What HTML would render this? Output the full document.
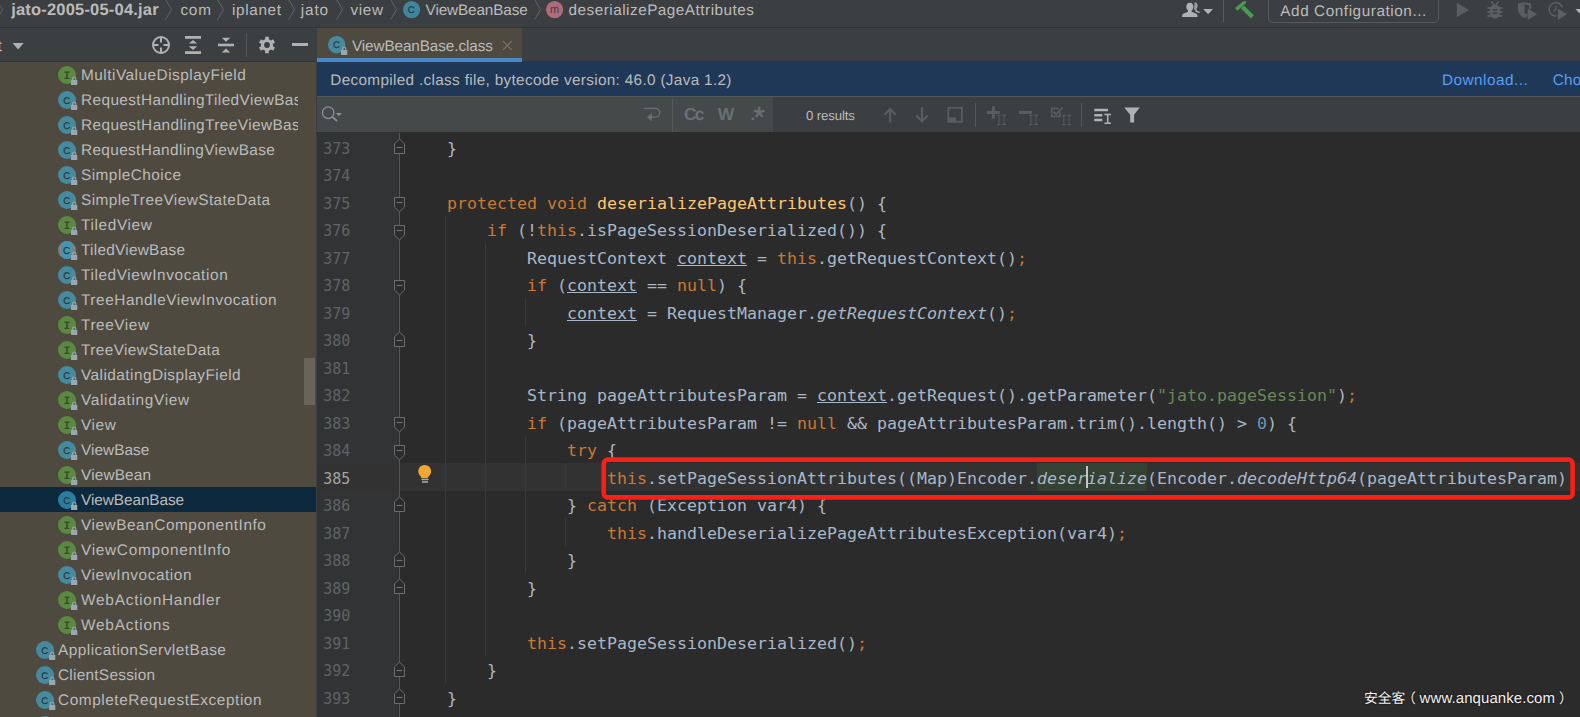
<!DOCTYPE html>
<html><head><meta charset="utf-8"><title>ViewBeanBase.class</title>
<style>
*{box-sizing:border-box;margin:0;padding:0}
html,body{width:1580px;height:717px;overflow:hidden;background:#3c3f41}
body{position:relative;text-rendering:geometricPrecision;font-family:"Liberation Sans","Noto Sans CJK SC",sans-serif;color:#bbbbbb;font-size:16px}
.abs{position:absolute}
svg{position:absolute;overflow:visible}
#nav{left:0;top:0;width:1580px;height:28px;background:#3c3f41;border-bottom:1px solid #313335;overflow:hidden}
#ltool{left:0;top:28px;width:316px;height:34px;background:#3c3f41;border-bottom:1px solid #323537;overflow:hidden}
#tree{left:0;top:62px;width:316px;height:655px;background:#4e4a40;overflow:hidden}
.sel{left:0;width:316px;height:25px;background:#0d293e}
#tabs{left:317px;top:28px;width:1263px;height:34px;background:#3c3f41;overflow:hidden}
#tab{left:0;top:0;width:205px;height:34px;background:#4e4a40;border-bottom:4px solid #4a88c7}
#banner{left:317px;top:62px;width:1263px;height:34px;background:#1f3857;overflow:hidden}
#tline{left:522px;top:61px;width:1058px;height:1px;background:#323537}
#bline{left:317px;top:96px;width:1263px;height:1px;background:#515658}
#search{left:317px;top:97px;width:1263px;height:35px;background:#3c3f41;overflow:hidden}
#sfield{left:0;top:0;width:456px;height:35px;background:#45494a}
#editor{left:317px;top:132px;width:1263px;height:585px;background:#2b2b2b;overflow:hidden}
#gutter{left:0;top:0;width:82px;height:585px;background:#313335}
#gline{left:82px;top:1px;width:1px;height:584px;background:#555555}
#caret-row{left:0;top:331px;width:1263px;height:27.5px;background:#323232}
.k{color:#cc7832}.m{color:#ffc66d}.s{color:#6a8759}.n{color:#6897bb}.i{font-style:italic}
.u{text-decoration:underline;text-decoration-thickness:1px;text-underline-offset:1px}
.g{position:absolute;width:1px;background:#383838}
</style></head><body>
<div id="nav" class="abs"></div><div id="ltool" class="abs"></div><div id="tree" class="abs"></div><div id="tabs" class="abs"><div id="tab" class="abs"></div></div><div id="tline" class="abs"></div><div id="banner" class="abs"></div><div id="bline" class="abs"></div><div id="search" class="abs"><div id="sfield" class="abs"></div></div><div id="editor" class="abs"><div id="gutter" class="abs"></div><div id="caret-row" class="abs"></div><div id="gline" class="abs"></div></div>
<svg style="left:-4px;top:-1px" width="8" height="22" viewBox="0 0 8 22"><path d="M0.5 0.5L6.5 10.6L0.5 20.7" fill="none" stroke="#626466" stroke-width="1"/></svg>
<div class="abs" style="left:11.20px;top:2.00px;font-size:16.5px;line-height:1;color:#bbbbbb;white-space:pre;font-weight:700;letter-spacing:0.189px;">jato-2005-05-04.jar</div>
<svg style="left:165px;top:-1px" width="8" height="22" viewBox="0 0 8 22"><path d="M0.5 0.5L6.5 10.6L0.5 20.7" fill="none" stroke="#626466" stroke-width="1"/></svg>
<svg style="left:217px;top:-1px" width="8" height="22" viewBox="0 0 8 22"><path d="M0.5 0.5L6.5 10.6L0.5 20.7" fill="none" stroke="#626466" stroke-width="1"/></svg>
<svg style="left:288px;top:-1px" width="8" height="22" viewBox="0 0 8 22"><path d="M0.5 0.5L6.5 10.6L0.5 20.7" fill="none" stroke="#626466" stroke-width="1"/></svg>
<svg style="left:336px;top:-1px" width="8" height="22" viewBox="0 0 8 22"><path d="M0.5 0.5L6.5 10.6L0.5 20.7" fill="none" stroke="#626466" stroke-width="1"/></svg>
<svg style="left:390px;top:-1px" width="8" height="22" viewBox="0 0 8 22"><path d="M0.5 0.5L6.5 10.6L0.5 20.7" fill="none" stroke="#626466" stroke-width="1"/></svg>
<svg style="left:534px;top:-1px" width="8" height="22" viewBox="0 0 8 22"><path d="M0.5 0.5L6.5 10.6L0.5 20.7" fill="none" stroke="#626466" stroke-width="1"/></svg>
<div class="abs" style="left:180.40px;top:3.00px;font-size:15.3px;line-height:1;color:#bbbbbb;white-space:pre;letter-spacing:0.798px;">com</div>
<div class="abs" style="left:232.00px;top:3.00px;font-size:15.3px;line-height:1;color:#bbbbbb;white-space:pre;letter-spacing:0.646px;">iplanet</div>
<div class="abs" style="left:300.80px;top:3.00px;font-size:15.3px;line-height:1;color:#bbbbbb;white-space:pre;letter-spacing:0.882px;">jato</div>
<div class="abs" style="left:350.40px;top:3.00px;font-size:15.3px;line-height:1;color:#bbbbbb;white-space:pre;letter-spacing:0.698px;">view</div>
<svg style="left:402.6px;top:1.0px" width="17.2" height="17.2" viewBox="0 0 17.2 17.2"><circle cx="8.6" cy="8.6" r="8.6" fill="rgba(64,182,224,.6)"/><text x="8.299999999999999" y="12.2" text-anchor="middle" font-family="Liberation Sans" font-weight="normal" font-size="9.6" fill="rgba(35,31,32,.7)" stroke="rgba(35,31,32,.7)" stroke-width="0.35">C</text></svg>
<div class="abs" style="left:425.60px;top:3.00px;font-size:15.3px;line-height:1;color:#bbbbbb;white-space:pre;letter-spacing:-0.124px;">ViewBeanBase</div>
<svg style="left:546.4px;top:1.0px" width="17.2" height="17.2" viewBox="0 0 17.2 17.2"><circle cx="8.6" cy="8.6" r="8.6" fill="rgba(249,139,158,.6)"/><text x="8.6" y="11.8" text-anchor="middle" font-family="Liberation Sans" font-weight="normal" font-size="11" fill="rgba(35,31,32,.72)">m</text></svg>
<div class="abs" style="left:568.50px;top:3.00px;font-size:15.3px;line-height:1;color:#bbbbbb;white-space:pre;letter-spacing:0.501px;">deserializePageAttributes</div>
<svg style="left:1181px;top:1px" width="34" height="18" viewBox="0 0 34 18"><path d="M13.6 1.2c2 0 3 1.6 3 3.6 0 1.3-.5 2.5-1.2 3.2l.3 1.2 3.3 1.7-.6 1.3-3.6-1.2-1.6-3z" fill="#afb1b3" opacity=".85"/><path d="M8.9 1.8c2.1 0 3.5 1.6 3.5 3.9 0 1.6-.7 3-1.7 3.8v1.2l4.2 1.9c1 .5 1.6 1.4 1.6 2.4v1H1.2v-1c0-1 .6-1.9 1.6-2.4L7 10.700V9.500C6 8.700 5.300 7.300 5.300 5.700c0-2.300 1.500-3.900 3.600-3.900z" fill="#afb1b3"/><path d="M22.200 8h9.800l-4.900 5.200z" fill="#afb1b3"/></svg>
<div class="abs" style="left:1223px;top:0;width:1px;height:22px;background:#585b5d"></div>
<svg style="left:1234px;top:0" width="21" height="20" viewBox="0 0 21 20"><path d="M1.100 8L9 1.400 12.300 1.100 11.600 3.400 3.400 10.800z" fill="#499c54"/><path d="M10 5.400L19.800 15.200 17 18.400 6.800 8.200z" fill="#499c54"/></svg>
<div class="abs" style="left:1268.200px;top:-6px;width:171.200px;height:28.900px;border:1.800px solid #56595b;border-radius:5px"></div>
<div class="abs" style="left:1280.30px;top:4.00px;font-size:15.3px;line-height:1;color:#bbbbbb;white-space:pre;letter-spacing:0.569px;">Add Configuration...</div>
<svg style="left:1456px;top:2px" width="14" height="17" viewBox="0 0 14 17"><path d="M0.800 0.700l12.200 7.300L0.800 15.300z" fill="#5c5e5f"/></svg>
<svg style="left:1486px;top:0" width="18" height="20" viewBox="0 0 18 20"><ellipse cx="9" cy="11.500" rx="5.200" ry="7.300" fill="#5c5e5f"/><path d="M1.500 8h15M1.500 12h15M1.500 16h15" stroke="#5c5e5f" stroke-width="2" fill="none"/><path d="M5.300 1.300L8 4.800M12.700 1.300L10 4.800" stroke="#5c5e5f" stroke-width="1.700" fill="none"/><path d="M6.800 9.700h4.400M6.800 13.300h4.400" stroke="#3c3f41" stroke-width="1.400"/></svg>
<svg style="left:1517px;top:1px" width="21" height="20" viewBox="0 0 21 20"><path d="M1 2.600L7.600 1.200V17.200C3.500 15.200 1 11.600 1 7.500z" fill="#5c5e5f"/><path d="M7.600 1.200L14.200 2.600V8h-2.100V4.300L7.600 3.300z" fill="#5c5e5f"/><path d="M7.600 17.200c1-.5 2-1.200 2.700-2v-2.500h-2.700z" fill="#5c5e5f"/><path d="M10.700 7.400L20 13.200 10.700 19z" fill="#5c5e5f"/></svg>
<svg style="left:1547px;top:1px" width="33" height="20" viewBox="0 0 33 20"><path d="M15.200 6.300A6.700 6.700 0 1 0 9.400 15" fill="none" stroke="#5c5e5f" stroke-width="1.600"/><path d="M9.400 4.800L8.700 8.300 6.800 10.600" fill="none" stroke="#5c5e5f" stroke-width="1.400"/><path d="M10.800 7.400l9.200 5.800-9.200 5.800z" fill="#5c5e5f"/><path d="M28.500 7.900h8l-4 4.500z" fill="#afb1b3"/></svg>
<div class="abs" style="left:-2.60px;top:39.00px;font-size:15.6px;line-height:1;color:#bbbbbb;white-space:pre;">t</div>
<svg style="left:12px;top:42px" width="12" height="8" viewBox="0 0 12 8"><path d="M0.500 1h11.200L6.100 7.600z" fill="#afb1b3"/></svg>
<svg style="left:151px;top:35px" width="20" height="20" viewBox="0 0 20 20"><circle cx="10" cy="10" r="8" fill="none" stroke="#afb1b3" stroke-width="2"/><path d="M10 2v5.500M10 12.500v5.500M2 10h5.500M12.500 10h5.500" stroke="#afb1b3" stroke-width="2" fill="none"/></svg>
<svg style="left:185px;top:36px" width="16" height="18" viewBox="0 0 16 18"><rect x="0" y="0" width="16" height="2.800" fill="#afb1b3"/><rect x="0" y="15.200" width="16" height="2.800" fill="#afb1b3"/><path d="M8 3.900l4.200 3.600H3.800z" fill="#afb1b3"/><path d="M8 14.100l4.200-3.800H3.800z" fill="#afb1b3"/></svg>
<svg style="left:218px;top:36px" width="16" height="18" viewBox="0 0 16 18"><rect x="0" y="7.700" width="16" height="2.600" fill="#afb1b3"/><path d="M8 5.800l4.200-4.100H3.800z" fill="#afb1b3"/><path d="M8 12.400l4.200 4.100H3.800z" fill="#afb1b3"/></svg>
<div class="abs" style="left:246px;top:33px;width:1px;height:24px;background:#555759"></div>
<svg style="left:257px;top:35px" width="20" height="20" viewBox="0 0 20 20"><path d="M8.18 1.85L11.82 1.85L11.82 4.18L14.13 5.51L16.15 4.35L17.97 7.50L15.95 8.67L15.95 11.33L17.97 12.50L16.15 15.65L14.13 14.49L11.82 15.82L11.82 18.15L8.18 18.15L8.18 15.82L5.87 14.49L3.85 15.65L2.03 12.50L4.05 11.33L4.05 8.67L2.03 7.50L3.85 4.35L5.87 5.51L8.18 4.18zM12.90 10.00A2.9 2.9 0 1 0 7.10 10.00A2.9 2.9 0 1 0 12.90 10.00z" fill="#afb1b3" fill-rule="evenodd"/></svg>
<div class="abs" style="left:292px;top:43.200px;width:16px;height:3px;background:#afb1b3"></div>
<div class="abs sel" style="top:487px"></div>
<div class="abs" style="left:0;top:62px;width:298.200px;height:655px;overflow:hidden">
<div class="abs" style="left:81.00px;top:6.00px;font-size:15.4px;line-height:1;color:#bbbbbb;white-space:pre;letter-spacing:0.489px;">MultiValueDisplayField</div>
<div class="abs" style="left:81.00px;top:31.00px;font-size:15.4px;line-height:1;color:#bbbbbb;white-space:pre;letter-spacing:0.385px;">RequestHandlingTiledViewBase</div>
<div class="abs" style="left:81.00px;top:56.00px;font-size:15.4px;line-height:1;color:#bbbbbb;white-space:pre;letter-spacing:0.400px;">RequestHandlingTreeViewBase</div>
<div class="abs" style="left:81.00px;top:81.00px;font-size:15.4px;line-height:1;color:#bbbbbb;white-space:pre;letter-spacing:0.346px;">RequestHandlingViewBase</div>
<div class="abs" style="left:81.00px;top:106.00px;font-size:15.4px;line-height:1;color:#bbbbbb;white-space:pre;letter-spacing:0.454px;">SimpleChoice</div>
<div class="abs" style="left:81.00px;top:131.00px;font-size:15.4px;line-height:1;color:#bbbbbb;white-space:pre;letter-spacing:0.428px;">SimpleTreeViewStateData</div>
<div class="abs" style="left:81.00px;top:156.00px;font-size:15.4px;line-height:1;color:#bbbbbb;white-space:pre;letter-spacing:0.625px;">TiledView</div>
<div class="abs" style="left:81.00px;top:181.00px;font-size:15.4px;line-height:1;color:#bbbbbb;white-space:pre;letter-spacing:0.250px;">TiledViewBase</div>
<div class="abs" style="left:81.00px;top:206.00px;font-size:15.4px;line-height:1;color:#bbbbbb;white-space:pre;letter-spacing:0.593px;">TiledViewInvocation</div>
<div class="abs" style="left:81.00px;top:231.00px;font-size:15.4px;line-height:1;color:#bbbbbb;white-space:pre;letter-spacing:0.542px;">TreeHandleViewInvocation</div>
<div class="abs" style="left:81.00px;top:256.00px;font-size:15.4px;line-height:1;color:#bbbbbb;white-space:pre;letter-spacing:0.555px;">TreeView</div>
<div class="abs" style="left:81.00px;top:281.00px;font-size:15.4px;line-height:1;color:#bbbbbb;white-space:pre;letter-spacing:0.388px;">TreeViewStateData</div>
<div class="abs" style="left:81.00px;top:306.00px;font-size:15.4px;line-height:1;color:#bbbbbb;white-space:pre;letter-spacing:0.446px;">ValidatingDisplayField</div>
<div class="abs" style="left:81.00px;top:331.00px;font-size:15.4px;line-height:1;color:#bbbbbb;white-space:pre;letter-spacing:0.654px;">ValidatingView</div>
<div class="abs" style="left:81.00px;top:356.00px;font-size:15.4px;line-height:1;color:#bbbbbb;white-space:pre;letter-spacing:0.577px;">View</div>
<div class="abs" style="left:81.00px;top:381.00px;font-size:15.4px;line-height:1;color:#bbbbbb;white-space:pre;letter-spacing:0.016px;">ViewBase</div>
<div class="abs" style="left:81.00px;top:406.00px;font-size:15.4px;line-height:1;color:#bbbbbb;white-space:pre;letter-spacing:0.146px;">ViewBean</div>
<div class="abs" style="left:81.00px;top:431.00px;font-size:15.4px;line-height:1;color:#bbbbbb;white-space:pre;letter-spacing:-0.084px;">ViewBeanBase</div>
<div class="abs" style="left:81.00px;top:456.00px;font-size:15.4px;line-height:1;color:#bbbbbb;white-space:pre;letter-spacing:0.530px;">ViewBeanComponentInfo</div>
<div class="abs" style="left:81.00px;top:481.00px;font-size:15.4px;line-height:1;color:#bbbbbb;white-space:pre;letter-spacing:0.692px;">ViewComponentInfo</div>
<div class="abs" style="left:81.00px;top:506.00px;font-size:15.4px;line-height:1;color:#bbbbbb;white-space:pre;letter-spacing:0.561px;">ViewInvocation</div>
<div class="abs" style="left:81.00px;top:531.00px;font-size:15.4px;line-height:1;color:#bbbbbb;white-space:pre;letter-spacing:0.760px;">WebActionHandler</div>
<div class="abs" style="left:81.00px;top:556.00px;font-size:15.4px;line-height:1;color:#bbbbbb;white-space:pre;letter-spacing:0.766px;">WebActions</div>
<div class="abs" style="left:58.00px;top:581.00px;font-size:15.4px;line-height:1;color:#bbbbbb;white-space:pre;letter-spacing:0.460px;">ApplicationServletBase</div>
<div class="abs" style="left:58.00px;top:606.00px;font-size:15.4px;line-height:1;color:#bbbbbb;white-space:pre;letter-spacing:0.253px;">ClientSession</div>
<div class="abs" style="left:58.00px;top:631.00px;font-size:15.4px;line-height:1;color:#bbbbbb;white-space:pre;letter-spacing:0.554px;">CompleteRequestException</div>
<div class="abs" style="left:58.00px;top:656.00px;font-size:15.4px;line-height:1;color:#bbbbbb;white-space:pre;letter-spacing:0.18px;">CompleteRequestInfo</div>
</div>
<svg style="left:58.0px;top:66.0px" width="18" height="18" viewBox="0 0 18 18"><circle cx="9" cy="9" r="9" fill="rgba(98,181,67,.6)"/><text x="8.8" y="12.8" text-anchor="middle" font-family="Liberation Mono" font-weight="bold" font-size="11.4" fill="rgba(35,31,32,.62)">I</text></svg><svg style="left:70.6px;top:76.0px" width="7" height="9" viewBox="0 0 7 9"><rect x="0" y="4" width="6.300" height="5" fill="#9aa7b0"/><path d="M1.6 4.2V2.6a1.6 1.6 0 0 1 3.2 0V4.2" fill="none" stroke="#9aa7b0" stroke-width="1.1"/></svg>
<svg style="left:58.0px;top:91.0px" width="18" height="18" viewBox="0 0 18 18"><circle cx="9" cy="9" r="9" fill="rgba(64,182,224,.6)"/><text x="8.7" y="12.6" text-anchor="middle" font-family="Liberation Sans" font-weight="normal" font-size="9.6" fill="rgba(35,31,32,.7)" stroke="rgba(35,31,32,.7)" stroke-width="0.35">C</text></svg><svg style="left:70.6px;top:101.0px" width="7" height="9" viewBox="0 0 7 9"><rect x="0" y="4" width="6.300" height="5" fill="#9aa7b0"/><path d="M1.6 4.2V2.6a1.6 1.6 0 0 1 3.2 0V4.2" fill="none" stroke="#9aa7b0" stroke-width="1.1"/></svg>
<svg style="left:58.0px;top:116.0px" width="18" height="18" viewBox="0 0 18 18"><circle cx="9" cy="9" r="9" fill="rgba(64,182,224,.6)"/><text x="8.7" y="12.6" text-anchor="middle" font-family="Liberation Sans" font-weight="normal" font-size="9.6" fill="rgba(35,31,32,.7)" stroke="rgba(35,31,32,.7)" stroke-width="0.35">C</text></svg><svg style="left:70.6px;top:126.0px" width="7" height="9" viewBox="0 0 7 9"><rect x="0" y="4" width="6.300" height="5" fill="#9aa7b0"/><path d="M1.6 4.2V2.6a1.6 1.6 0 0 1 3.2 0V4.2" fill="none" stroke="#9aa7b0" stroke-width="1.1"/></svg>
<svg style="left:58.0px;top:141.0px" width="18" height="18" viewBox="0 0 18 18"><circle cx="9" cy="9" r="9" fill="rgba(64,182,224,.6)"/><text x="8.7" y="12.6" text-anchor="middle" font-family="Liberation Sans" font-weight="normal" font-size="9.6" fill="rgba(35,31,32,.7)" stroke="rgba(35,31,32,.7)" stroke-width="0.35">C</text></svg><svg style="left:70.6px;top:151.0px" width="7" height="9" viewBox="0 0 7 9"><rect x="0" y="4" width="6.300" height="5" fill="#9aa7b0"/><path d="M1.6 4.2V2.6a1.6 1.6 0 0 1 3.2 0V4.2" fill="none" stroke="#9aa7b0" stroke-width="1.1"/></svg>
<svg style="left:58.0px;top:166.0px" width="18" height="18" viewBox="0 0 18 18"><circle cx="9" cy="9" r="9" fill="rgba(64,182,224,.6)"/><text x="8.7" y="12.6" text-anchor="middle" font-family="Liberation Sans" font-weight="normal" font-size="9.6" fill="rgba(35,31,32,.7)" stroke="rgba(35,31,32,.7)" stroke-width="0.35">C</text></svg><svg style="left:70.6px;top:176.0px" width="7" height="9" viewBox="0 0 7 9"><rect x="0" y="4" width="6.300" height="5" fill="#9aa7b0"/><path d="M1.6 4.2V2.6a1.6 1.6 0 0 1 3.2 0V4.2" fill="none" stroke="#9aa7b0" stroke-width="1.1"/></svg>
<svg style="left:58.0px;top:191.0px" width="18" height="18" viewBox="0 0 18 18"><circle cx="9" cy="9" r="9" fill="rgba(64,182,224,.6)"/><text x="8.7" y="12.6" text-anchor="middle" font-family="Liberation Sans" font-weight="normal" font-size="9.6" fill="rgba(35,31,32,.7)" stroke="rgba(35,31,32,.7)" stroke-width="0.35">C</text></svg><svg style="left:70.6px;top:201.0px" width="7" height="9" viewBox="0 0 7 9"><rect x="0" y="4" width="6.300" height="5" fill="#9aa7b0"/><path d="M1.6 4.2V2.6a1.6 1.6 0 0 1 3.2 0V4.2" fill="none" stroke="#9aa7b0" stroke-width="1.1"/></svg>
<svg style="left:58.0px;top:216.0px" width="18" height="18" viewBox="0 0 18 18"><circle cx="9" cy="9" r="9" fill="rgba(98,181,67,.6)"/><text x="8.8" y="12.8" text-anchor="middle" font-family="Liberation Mono" font-weight="bold" font-size="11.4" fill="rgba(35,31,32,.62)">I</text></svg><svg style="left:70.6px;top:226.0px" width="7" height="9" viewBox="0 0 7 9"><rect x="0" y="4" width="6.300" height="5" fill="#9aa7b0"/><path d="M1.6 4.2V2.6a1.6 1.6 0 0 1 3.2 0V4.2" fill="none" stroke="#9aa7b0" stroke-width="1.1"/></svg>
<svg style="left:58.0px;top:241.0px" width="18" height="18" viewBox="0 0 18 18"><defs><clipPath id="ac"><circle cx="9" cy="9" r="9"/></clipPath></defs><circle cx="9" cy="9" r="9" fill="rgba(154,167,176,.62)"/><rect x="4" y="0" width="10.3" height="18" fill="#4496b0" clip-path="url(#ac)"/><text x="8.7" y="12.7" text-anchor="middle" font-family="Liberation Sans" font-size="10" fill="rgba(35,31,32,.7)" stroke="rgba(35,31,32,.7)" stroke-width="0.35">C</text></svg><svg style="left:70.6px;top:251.0px" width="7" height="9" viewBox="0 0 7 9"><rect x="0" y="4" width="6.300" height="5" fill="#9aa7b0"/><path d="M1.6 4.2V2.6a1.6 1.6 0 0 1 3.2 0V4.2" fill="none" stroke="#9aa7b0" stroke-width="1.1"/></svg>
<svg style="left:58.0px;top:266.0px" width="18" height="18" viewBox="0 0 18 18"><circle cx="9" cy="9" r="9" fill="rgba(64,182,224,.6)"/><text x="8.7" y="12.6" text-anchor="middle" font-family="Liberation Sans" font-weight="normal" font-size="9.6" fill="rgba(35,31,32,.7)" stroke="rgba(35,31,32,.7)" stroke-width="0.35">C</text></svg><svg style="left:70.6px;top:276.0px" width="7" height="9" viewBox="0 0 7 9"><rect x="0" y="4" width="6.300" height="5" fill="#9aa7b0"/><path d="M1.6 4.2V2.6a1.6 1.6 0 0 1 3.2 0V4.2" fill="none" stroke="#9aa7b0" stroke-width="1.1"/></svg>
<svg style="left:58.0px;top:291.0px" width="18" height="18" viewBox="0 0 18 18"><circle cx="9" cy="9" r="9" fill="rgba(64,182,224,.6)"/><text x="8.7" y="12.6" text-anchor="middle" font-family="Liberation Sans" font-weight="normal" font-size="9.6" fill="rgba(35,31,32,.7)" stroke="rgba(35,31,32,.7)" stroke-width="0.35">C</text></svg><svg style="left:70.6px;top:301.0px" width="7" height="9" viewBox="0 0 7 9"><rect x="0" y="4" width="6.300" height="5" fill="#9aa7b0"/><path d="M1.6 4.2V2.6a1.6 1.6 0 0 1 3.2 0V4.2" fill="none" stroke="#9aa7b0" stroke-width="1.1"/></svg>
<svg style="left:58.0px;top:316.0px" width="18" height="18" viewBox="0 0 18 18"><circle cx="9" cy="9" r="9" fill="rgba(98,181,67,.6)"/><text x="8.8" y="12.8" text-anchor="middle" font-family="Liberation Mono" font-weight="bold" font-size="11.4" fill="rgba(35,31,32,.62)">I</text></svg><svg style="left:70.6px;top:326.0px" width="7" height="9" viewBox="0 0 7 9"><rect x="0" y="4" width="6.300" height="5" fill="#9aa7b0"/><path d="M1.6 4.2V2.6a1.6 1.6 0 0 1 3.2 0V4.2" fill="none" stroke="#9aa7b0" stroke-width="1.1"/></svg>
<svg style="left:58.0px;top:341.0px" width="18" height="18" viewBox="0 0 18 18"><circle cx="9" cy="9" r="9" fill="rgba(98,181,67,.6)"/><text x="8.8" y="12.8" text-anchor="middle" font-family="Liberation Mono" font-weight="bold" font-size="11.4" fill="rgba(35,31,32,.62)">I</text></svg><svg style="left:70.6px;top:351.0px" width="7" height="9" viewBox="0 0 7 9"><rect x="0" y="4" width="6.300" height="5" fill="#9aa7b0"/><path d="M1.6 4.2V2.6a1.6 1.6 0 0 1 3.2 0V4.2" fill="none" stroke="#9aa7b0" stroke-width="1.1"/></svg>
<svg style="left:58.0px;top:366.0px" width="18" height="18" viewBox="0 0 18 18"><circle cx="9" cy="9" r="9" fill="rgba(64,182,224,.6)"/><text x="8.7" y="12.6" text-anchor="middle" font-family="Liberation Sans" font-weight="normal" font-size="9.6" fill="rgba(35,31,32,.7)" stroke="rgba(35,31,32,.7)" stroke-width="0.35">C</text></svg><svg style="left:70.6px;top:376.0px" width="7" height="9" viewBox="0 0 7 9"><rect x="0" y="4" width="6.300" height="5" fill="#9aa7b0"/><path d="M1.6 4.2V2.6a1.6 1.6 0 0 1 3.2 0V4.2" fill="none" stroke="#9aa7b0" stroke-width="1.1"/></svg>
<svg style="left:58.0px;top:391.0px" width="18" height="18" viewBox="0 0 18 18"><circle cx="9" cy="9" r="9" fill="rgba(98,181,67,.6)"/><text x="8.8" y="12.8" text-anchor="middle" font-family="Liberation Mono" font-weight="bold" font-size="11.4" fill="rgba(35,31,32,.62)">I</text></svg><svg style="left:70.6px;top:401.0px" width="7" height="9" viewBox="0 0 7 9"><rect x="0" y="4" width="6.300" height="5" fill="#9aa7b0"/><path d="M1.6 4.2V2.6a1.6 1.6 0 0 1 3.2 0V4.2" fill="none" stroke="#9aa7b0" stroke-width="1.1"/></svg>
<svg style="left:58.0px;top:416.0px" width="18" height="18" viewBox="0 0 18 18"><circle cx="9" cy="9" r="9" fill="rgba(98,181,67,.6)"/><text x="8.8" y="12.8" text-anchor="middle" font-family="Liberation Mono" font-weight="bold" font-size="11.4" fill="rgba(35,31,32,.62)">I</text></svg><svg style="left:70.6px;top:426.0px" width="7" height="9" viewBox="0 0 7 9"><rect x="0" y="4" width="6.300" height="5" fill="#9aa7b0"/><path d="M1.6 4.2V2.6a1.6 1.6 0 0 1 3.2 0V4.2" fill="none" stroke="#9aa7b0" stroke-width="1.1"/></svg>
<svg style="left:58.0px;top:441.0px" width="18" height="18" viewBox="0 0 18 18"><circle cx="9" cy="9" r="9" fill="rgba(64,182,224,.6)"/><text x="8.7" y="12.6" text-anchor="middle" font-family="Liberation Sans" font-weight="normal" font-size="9.6" fill="rgba(35,31,32,.7)" stroke="rgba(35,31,32,.7)" stroke-width="0.35">C</text></svg><svg style="left:70.6px;top:451.0px" width="7" height="9" viewBox="0 0 7 9"><rect x="0" y="4" width="6.300" height="5" fill="#9aa7b0"/><path d="M1.6 4.2V2.6a1.6 1.6 0 0 1 3.2 0V4.2" fill="none" stroke="#9aa7b0" stroke-width="1.1"/></svg>
<svg style="left:58.0px;top:466.0px" width="18" height="18" viewBox="0 0 18 18"><circle cx="9" cy="9" r="9" fill="rgba(98,181,67,.6)"/><text x="8.8" y="12.8" text-anchor="middle" font-family="Liberation Mono" font-weight="bold" font-size="11.4" fill="rgba(35,31,32,.62)">I</text></svg><svg style="left:70.6px;top:476.0px" width="7" height="9" viewBox="0 0 7 9"><rect x="0" y="4" width="6.300" height="5" fill="#9aa7b0"/><path d="M1.6 4.2V2.6a1.6 1.6 0 0 1 3.2 0V4.2" fill="none" stroke="#9aa7b0" stroke-width="1.1"/></svg>
<svg style="left:58.0px;top:491.0px" width="18" height="18" viewBox="0 0 18 18"><circle cx="9" cy="9" r="9" fill="rgba(64,182,224,.6)"/><text x="8.7" y="12.6" text-anchor="middle" font-family="Liberation Sans" font-weight="normal" font-size="9.6" fill="rgba(35,31,32,.7)" stroke="rgba(35,31,32,.7)" stroke-width="0.35">C</text></svg><svg style="left:70.6px;top:501.0px" width="7" height="9" viewBox="0 0 7 9"><rect x="0" y="4" width="6.300" height="5" fill="#9aa7b0"/><path d="M1.6 4.2V2.6a1.6 1.6 0 0 1 3.2 0V4.2" fill="none" stroke="#9aa7b0" stroke-width="1.1"/></svg>
<svg style="left:58.0px;top:516.0px" width="18" height="18" viewBox="0 0 18 18"><circle cx="9" cy="9" r="9" fill="rgba(98,181,67,.6)"/><text x="8.8" y="12.8" text-anchor="middle" font-family="Liberation Mono" font-weight="bold" font-size="11.4" fill="rgba(35,31,32,.62)">I</text></svg><svg style="left:70.6px;top:526.0px" width="7" height="9" viewBox="0 0 7 9"><rect x="0" y="4" width="6.300" height="5" fill="#9aa7b0"/><path d="M1.6 4.2V2.6a1.6 1.6 0 0 1 3.2 0V4.2" fill="none" stroke="#9aa7b0" stroke-width="1.1"/></svg>
<svg style="left:58.0px;top:541.0px" width="18" height="18" viewBox="0 0 18 18"><circle cx="9" cy="9" r="9" fill="rgba(98,181,67,.6)"/><text x="8.8" y="12.8" text-anchor="middle" font-family="Liberation Mono" font-weight="bold" font-size="11.4" fill="rgba(35,31,32,.62)">I</text></svg><svg style="left:70.6px;top:551.0px" width="7" height="9" viewBox="0 0 7 9"><rect x="0" y="4" width="6.300" height="5" fill="#9aa7b0"/><path d="M1.6 4.2V2.6a1.6 1.6 0 0 1 3.2 0V4.2" fill="none" stroke="#9aa7b0" stroke-width="1.1"/></svg>
<svg style="left:58.0px;top:566.0px" width="18" height="18" viewBox="0 0 18 18"><circle cx="9" cy="9" r="9" fill="rgba(64,182,224,.6)"/><text x="8.7" y="12.6" text-anchor="middle" font-family="Liberation Sans" font-weight="normal" font-size="9.6" fill="rgba(35,31,32,.7)" stroke="rgba(35,31,32,.7)" stroke-width="0.35">C</text></svg><svg style="left:70.6px;top:576.0px" width="7" height="9" viewBox="0 0 7 9"><rect x="0" y="4" width="6.300" height="5" fill="#9aa7b0"/><path d="M1.6 4.2V2.6a1.6 1.6 0 0 1 3.2 0V4.2" fill="none" stroke="#9aa7b0" stroke-width="1.1"/></svg>
<svg style="left:58.0px;top:591.0px" width="18" height="18" viewBox="0 0 18 18"><circle cx="9" cy="9" r="9" fill="rgba(98,181,67,.6)"/><text x="8.8" y="12.8" text-anchor="middle" font-family="Liberation Mono" font-weight="bold" font-size="11.4" fill="rgba(35,31,32,.62)">I</text></svg><svg style="left:70.6px;top:601.0px" width="7" height="9" viewBox="0 0 7 9"><rect x="0" y="4" width="6.300" height="5" fill="#9aa7b0"/><path d="M1.6 4.2V2.6a1.6 1.6 0 0 1 3.2 0V4.2" fill="none" stroke="#9aa7b0" stroke-width="1.1"/></svg>
<svg style="left:58.0px;top:616.0px" width="18" height="18" viewBox="0 0 18 18"><circle cx="9" cy="9" r="9" fill="rgba(98,181,67,.6)"/><text x="8.8" y="12.8" text-anchor="middle" font-family="Liberation Mono" font-weight="bold" font-size="11.4" fill="rgba(35,31,32,.62)">I</text></svg><svg style="left:70.6px;top:626.0px" width="7" height="9" viewBox="0 0 7 9"><rect x="0" y="4" width="6.300" height="5" fill="#9aa7b0"/><path d="M1.6 4.2V2.6a1.6 1.6 0 0 1 3.2 0V4.2" fill="none" stroke="#9aa7b0" stroke-width="1.1"/></svg>
<svg style="left:36.0px;top:641.0px" width="18" height="18" viewBox="0 0 18 18"><circle cx="9" cy="9" r="9" fill="rgba(64,182,224,.6)"/><text x="8.7" y="12.6" text-anchor="middle" font-family="Liberation Sans" font-weight="normal" font-size="9.6" fill="rgba(35,31,32,.7)" stroke="rgba(35,31,32,.7)" stroke-width="0.35">C</text></svg><svg style="left:48.6px;top:651.0px" width="7" height="9" viewBox="0 0 7 9"><rect x="0" y="4" width="6.300" height="5" fill="#9aa7b0"/><path d="M1.6 4.2V2.6a1.6 1.6 0 0 1 3.2 0V4.2" fill="none" stroke="#9aa7b0" stroke-width="1.1"/></svg>
<svg style="left:36.0px;top:666.0px" width="18" height="18" viewBox="0 0 18 18"><circle cx="9" cy="9" r="9" fill="rgba(64,182,224,.6)"/><text x="8.7" y="12.6" text-anchor="middle" font-family="Liberation Sans" font-weight="normal" font-size="9.6" fill="rgba(35,31,32,.7)" stroke="rgba(35,31,32,.7)" stroke-width="0.35">C</text></svg><svg style="left:48.6px;top:676.0px" width="7" height="9" viewBox="0 0 7 9"><rect x="0" y="4" width="6.300" height="5" fill="#9aa7b0"/><path d="M1.6 4.2V2.6a1.6 1.6 0 0 1 3.2 0V4.2" fill="none" stroke="#9aa7b0" stroke-width="1.1"/></svg>
<svg style="left:36.0px;top:691.0px" width="18" height="18" viewBox="0 0 18 18"><circle cx="9" cy="9" r="9" fill="rgba(64,182,224,.6)"/><text x="8.7" y="12.6" text-anchor="middle" font-family="Liberation Sans" font-weight="normal" font-size="9.6" fill="rgba(35,31,32,.7)" stroke="rgba(35,31,32,.7)" stroke-width="0.35">C</text></svg><svg style="left:48.6px;top:701.0px" width="7" height="9" viewBox="0 0 7 9"><rect x="0" y="4" width="6.300" height="5" fill="#9aa7b0"/><path d="M1.6 4.2V2.6a1.6 1.6 0 0 1 3.2 0V4.2" fill="none" stroke="#9aa7b0" stroke-width="1.1"/></svg>
<svg style="left:36.0px;top:716.0px" width="18" height="18" viewBox="0 0 18 18"><circle cx="9" cy="9" r="9" fill="rgba(64,182,224,.6)"/><text x="8.7" y="12.6" text-anchor="middle" font-family="Liberation Sans" font-weight="normal" font-size="9.6" fill="rgba(35,31,32,.7)" stroke="rgba(35,31,32,.7)" stroke-width="0.35">C</text></svg><svg style="left:48.6px;top:726.0px" width="7" height="9" viewBox="0 0 7 9"><rect x="0" y="4" width="6.300" height="5" fill="#9aa7b0"/><path d="M1.6 4.2V2.6a1.6 1.6 0 0 1 3.2 0V4.2" fill="none" stroke="#9aa7b0" stroke-width="1.1"/></svg>
<div class="abs" style="left:304px;top:358px;width:10.500px;height:47px;background:#67645c"></div>
<svg style="left:328.3px;top:36.3px" width="17.4" height="17.4" viewBox="0 0 17.4 17.4"><circle cx="8.7" cy="8.7" r="8.7" fill="rgba(64,182,224,.6)"/><text x="8.399999999999999" y="12.299999999999999" text-anchor="middle" font-family="Liberation Sans" font-weight="normal" font-size="9.6" fill="rgba(35,31,32,.7)" stroke="rgba(35,31,32,.7)" stroke-width="0.35">C</text></svg><svg style="left:340.6px;top:46.0px" width="7" height="9" viewBox="0 0 7 9"><rect x="0" y="4" width="6.300" height="5" fill="#9aa7b0"/><path d="M1.6 4.2V2.6a1.6 1.6 0 0 1 3.2 0V4.2" fill="none" stroke="#9aa7b0" stroke-width="1.1"/></svg>
<div class="abs" style="left:351.90px;top:39.00px;font-size:15.3px;line-height:1;color:#bbbbbb;white-space:pre;letter-spacing:-0.093px;">ViewBeanBase.class</div>
<svg style="left:502px;top:40px" width="11" height="11" viewBox="0 0 11 11"><path d="M1 1l8.800 8.800M9.800 1L1 9.800" stroke="#76736b" stroke-width="1.200" fill="none"/></svg>
<div class="abs" style="left:330.30px;top:73.00px;font-size:15.3px;line-height:1;color:#bbbbbb;white-space:pre;letter-spacing:0.331px;">Decompiled .class file, bytecode version: 46.0 (Java 1.2)</div>
<div class="abs" style="left:1442.00px;top:73.00px;font-size:15.3px;line-height:1;color:#589df6;white-space:pre;letter-spacing:0.493px;">Download...</div>
<div class="abs" style="left:1552.80px;top:73.00px;font-size:15.3px;line-height:1;color:#589df6;white-space:pre;letter-spacing:0.2px;">Choose Sources...</div>
<svg style="left:320px;top:105px" width="24" height="18" viewBox="0 0 24 18"><circle cx="8.200" cy="7.700" r="5.800" fill="none" stroke="#8a9296" stroke-width="1.300"/><path d="M12.400 11.900L17 16" stroke="#8a9296" stroke-width="1.700" fill="none"/><path d="M16 8h5.800l-2.900 3.200z" fill="#8a9296"/></svg>
<svg style="left:0;top:0" width="1580" height="140"><path d="M644.200 108.400H655.400a4.400 4.400 0 0 1 0 8.800H651.500" fill="none" stroke="#687074" stroke-width="1.300"/><path d="M647 117.200l4.900-4.200v8.200z" fill="#687074"/></svg>
<div class="abs" style="left:672px;top:99px;width:1px;height:33px;background:#53585a"></div>
<div class="abs" style="left:684.00px;top:106.00px;font-size:17.5px;line-height:1;color:#687074;white-space:pre;font-weight:700;letter-spacing:-1.887px;">Cc</div>
<div class="abs" style="left:717.80px;top:106.00px;font-size:17.5px;line-height:1;color:#687074;white-space:pre;font-weight:700;letter-spacing:-0.131px;">W</div>
<div class="abs" style="left:750.60px;top:107.00px;font-size:16.5px;line-height:1;color:#687074;white-space:pre;font-weight:700;">.</div>
<div class="abs" style="left:753.60px;top:104.00px;font-size:29px;line-height:1;color:#687074;white-space:pre;-webkit-text-stroke:0.4px #687074;">*</div>
<div class="abs" style="left:806.00px;top:109.00px;font-size:13.2px;line-height:1;color:#bbbbbb;white-space:pre;letter-spacing:-0.127px;">0 results</div>
<svg style="left:0;top:0" width="1580" height="140"><path d="M890.100 122.600V109M884.400 114.800l5.700-5.900 5.700 5.900" fill="none" stroke="#5c5c5c" stroke-width="2.100"/><path d="M922 107.300v13.800M916.300 115.400l5.700 5.900 5.700-5.900" fill="none" stroke="#5c5c5c" stroke-width="2.100"/><rect x="948.250" y="107.850" width="13.600" height="13.900" fill="none" stroke="#5c5c5c" stroke-width="1.700"/><rect x="948" y="117.400" width="8.100" height="5" fill="#5c5c5c"/></svg>
<div class="abs" style="left:975px;top:103px;width:1px;height:24px;background:#555759"></div>
<svg style="left:0;top:0" width="1580" height="140"><path d="M987 112.500h12.900M993.450 106.200v12.600" stroke="#5c5c5c" stroke-width="3" fill="none"/><path d="M997 115.3h3.800M997 124.6h3.800M998.9 115.3v9.3M1002.2 115.3h3.800M1002.2 124.6h3.800M1004.1 115.3v9.3" stroke="#5c5c5c" stroke-width="1" fill="none"/><path d="M1019 112.400h12.900" stroke="#5c5c5c" stroke-width="3" fill="none"/><path d="M1029 115.3h3.800M1029 124.6h3.800M1030.9 115.3v9.3M1034.2 115.3h3.800M1034.2 124.6h3.800M1036.1 115.3v9.3" stroke="#5c5c5c" stroke-width="1" fill="none"/><path d="M1060 112.500v4H1051.700V108.500h7" stroke="#5c5c5c" stroke-width="1.600" fill="none"/><path d="M1053.600 111.600l2.600 2.700 6.400-6.800" stroke="#5c5c5c" stroke-width="1.800" fill="none"/><path d="M1062 115.3h3.800M1062 124.6h3.800M1063.9 115.3v9.3M1067.2 115.3h3.800M1067.2 124.6h3.800M1069.1 115.3v9.3" stroke="#5c5c5c" stroke-width="1" fill="none"/></svg>
<div class="abs" style="left:1081px;top:103px;width:1px;height:24px;background:#555759"></div>
<svg style="left:0;top:0" width="1580" height="140"><path d="M1094.300 110h13.700M1094.300 115.200h8M1094.300 120h8" stroke="#afb1b3" stroke-width="2.400" fill="none"/><path d="M1104.400 114.500h6.600M1104.400 123.200h6.600M1107.700 114.500v8.700" stroke="#afb1b3" stroke-width="1.500" fill="none"/><path d="M1124.200 107.400h15.600l-5.700 7.300v7.900h-3.900v-7.900z" fill="#afb1b3"/></svg>
<div class="abs" style="left:323.20px;top:142.00px;font-size:15.0px;line-height:1;color:#606366;white-space:pre;font-family:'DejaVu Sans Mono','Liberation Mono',monospace;text-rendering:auto;">373</div>
<div class="abs" style="left:323.20px;top:169.00px;font-size:15.0px;line-height:1;color:#606366;white-space:pre;font-family:'DejaVu Sans Mono','Liberation Mono',monospace;text-rendering:auto;">374</div>
<div class="abs" style="left:323.20px;top:197.00px;font-size:15.0px;line-height:1;color:#606366;white-space:pre;font-family:'DejaVu Sans Mono','Liberation Mono',monospace;text-rendering:auto;">375</div>
<div class="abs" style="left:323.20px;top:224.00px;font-size:15.0px;line-height:1;color:#606366;white-space:pre;font-family:'DejaVu Sans Mono','Liberation Mono',monospace;text-rendering:auto;">376</div>
<div class="abs" style="left:323.20px;top:252.00px;font-size:15.0px;line-height:1;color:#606366;white-space:pre;font-family:'DejaVu Sans Mono','Liberation Mono',monospace;text-rendering:auto;">377</div>
<div class="abs" style="left:323.20px;top:279.00px;font-size:15.0px;line-height:1;color:#606366;white-space:pre;font-family:'DejaVu Sans Mono','Liberation Mono',monospace;text-rendering:auto;">378</div>
<div class="abs" style="left:323.20px;top:307.00px;font-size:15.0px;line-height:1;color:#606366;white-space:pre;font-family:'DejaVu Sans Mono','Liberation Mono',monospace;text-rendering:auto;">379</div>
<div class="abs" style="left:323.20px;top:334.00px;font-size:15.0px;line-height:1;color:#606366;white-space:pre;font-family:'DejaVu Sans Mono','Liberation Mono',monospace;text-rendering:auto;">380</div>
<div class="abs" style="left:323.20px;top:362.00px;font-size:15.0px;line-height:1;color:#606366;white-space:pre;font-family:'DejaVu Sans Mono','Liberation Mono',monospace;text-rendering:auto;">381</div>
<div class="abs" style="left:323.20px;top:389.00px;font-size:15.0px;line-height:1;color:#606366;white-space:pre;font-family:'DejaVu Sans Mono','Liberation Mono',monospace;text-rendering:auto;">382</div>
<div class="abs" style="left:323.20px;top:417.00px;font-size:15.0px;line-height:1;color:#606366;white-space:pre;font-family:'DejaVu Sans Mono','Liberation Mono',monospace;text-rendering:auto;">383</div>
<div class="abs" style="left:323.20px;top:444.00px;font-size:15.0px;line-height:1;color:#606366;white-space:pre;font-family:'DejaVu Sans Mono','Liberation Mono',monospace;text-rendering:auto;">384</div>
<div class="abs" style="left:323.20px;top:472.00px;font-size:15.0px;line-height:1;color:#a4a3a3;white-space:pre;font-family:'DejaVu Sans Mono','Liberation Mono',monospace;text-rendering:auto;">385</div>
<div class="abs" style="left:323.20px;top:499.00px;font-size:15.0px;line-height:1;color:#606366;white-space:pre;font-family:'DejaVu Sans Mono','Liberation Mono',monospace;text-rendering:auto;">386</div>
<div class="abs" style="left:323.20px;top:527.00px;font-size:15.0px;line-height:1;color:#606366;white-space:pre;font-family:'DejaVu Sans Mono','Liberation Mono',monospace;text-rendering:auto;">387</div>
<div class="abs" style="left:323.20px;top:554.00px;font-size:15.0px;line-height:1;color:#606366;white-space:pre;font-family:'DejaVu Sans Mono','Liberation Mono',monospace;text-rendering:auto;">388</div>
<div class="abs" style="left:323.20px;top:582.00px;font-size:15.0px;line-height:1;color:#606366;white-space:pre;font-family:'DejaVu Sans Mono','Liberation Mono',monospace;text-rendering:auto;">389</div>
<div class="abs" style="left:323.20px;top:609.00px;font-size:15.0px;line-height:1;color:#606366;white-space:pre;font-family:'DejaVu Sans Mono','Liberation Mono',monospace;text-rendering:auto;">390</div>
<div class="abs" style="left:323.20px;top:637.00px;font-size:15.0px;line-height:1;color:#606366;white-space:pre;font-family:'DejaVu Sans Mono','Liberation Mono',monospace;text-rendering:auto;">391</div>
<div class="abs" style="left:323.20px;top:664.00px;font-size:15.0px;line-height:1;color:#606366;white-space:pre;font-family:'DejaVu Sans Mono','Liberation Mono',monospace;text-rendering:auto;">392</div>
<div class="abs" style="left:323.20px;top:692.00px;font-size:15.0px;line-height:1;color:#606366;white-space:pre;font-family:'DejaVu Sans Mono','Liberation Mono',monospace;text-rendering:auto;">393</div>
<div class="g" style="left:445px;top:215.5px;height:467.5px"></div>
<div class="g" style="left:485px;top:243.0px;height:412.5px"></div>
<div class="g" style="left:525px;top:298.0px;height:27.5px"></div>
<div class="g" style="left:525px;top:435.5px;height:137.5px"></div>
<div class="g" style="left:565px;top:463.0px;height:27.5px"></div>
<div class="g" style="left:565px;top:518.0px;height:27.5px"></div>
<div class="abs" style="left:1037px;top:463px;width:110px;height:27.500px;background:#344134"></div>
<svg style="left:0;top:0" width="1" height="1"><path d="M394.500 153.5h10v-9.700l-5-4.800l-5 4.800z" fill="#2b2b2b" stroke="#6e6e6e" stroke-width="1"/><path d="M396.500 147.5h6" stroke="#6e6e6e" stroke-width="1.200"/></svg>
<svg style="left:0;top:0" width="1" height="1"><path d="M394.500 197.5h10v9.600l-5 4.800l-5-4.800z" fill="#2b2b2b" stroke="#6e6e6e" stroke-width="1"/><path d="M396.500 202.5h6" stroke="#6e6e6e" stroke-width="1.200"/></svg>
<svg style="left:0;top:0" width="1" height="1"><path d="M394.500 225.5h10v9.600l-5 4.800l-5-4.800z" fill="#2b2b2b" stroke="#6e6e6e" stroke-width="1"/><path d="M396.500 230.5h6" stroke="#6e6e6e" stroke-width="1.200"/></svg>
<svg style="left:0;top:0" width="1" height="1"><path d="M394.500 280.5h10v9.600l-5 4.800l-5-4.800z" fill="#2b2b2b" stroke="#6e6e6e" stroke-width="1"/><path d="M396.500 285.5h6" stroke="#6e6e6e" stroke-width="1.200"/></svg>
<svg style="left:0;top:0" width="1" height="1"><path d="M394.500 346.5h10v-9.700l-5-4.800l-5 4.800z" fill="#2b2b2b" stroke="#6e6e6e" stroke-width="1"/><path d="M396.500 340.5h6" stroke="#6e6e6e" stroke-width="1.200"/></svg>
<svg style="left:0;top:0" width="1" height="1"><path d="M394.500 417.5h10v9.600l-5 4.800l-5-4.800z" fill="#2b2b2b" stroke="#6e6e6e" stroke-width="1"/><path d="M396.500 422.5h6" stroke="#6e6e6e" stroke-width="1.200"/></svg>
<svg style="left:0;top:0" width="1" height="1"><path d="M394.500 445.5h10v9.600l-5 4.800l-5-4.800z" fill="#2b2b2b" stroke="#6e6e6e" stroke-width="1"/><path d="M396.500 450.5h6" stroke="#6e6e6e" stroke-width="1.200"/></svg>
<svg style="left:0;top:0" width="1" height="1"><path d="M394.500 511.5h10v-9.700l-5-4.800l-5 4.800z" fill="#2b2b2b" stroke="#6e6e6e" stroke-width="1"/><path d="M396.500 505.5h6" stroke="#6e6e6e" stroke-width="1.200"/></svg>
<svg style="left:0;top:0" width="1" height="1"><path d="M394.500 566.5h10v-9.700l-5-4.800l-5 4.800z" fill="#2b2b2b" stroke="#6e6e6e" stroke-width="1"/><path d="M396.500 560.5h6" stroke="#6e6e6e" stroke-width="1.200"/></svg>
<svg style="left:0;top:0" width="1" height="1"><path d="M394.500 593.5h10v-9.700l-5-4.800l-5 4.800z" fill="#2b2b2b" stroke="#6e6e6e" stroke-width="1"/><path d="M396.500 587.5h6" stroke="#6e6e6e" stroke-width="1.200"/></svg>
<svg style="left:0;top:0" width="1" height="1"><path d="M394.500 676.5h10v-9.700l-5-4.800l-5 4.800z" fill="#2b2b2b" stroke="#6e6e6e" stroke-width="1"/><path d="M396.500 670.5h6" stroke="#6e6e6e" stroke-width="1.200"/></svg>
<svg style="left:0;top:0" width="1" height="1"><path d="M394.500 703.5h10v-9.700l-5-4.800l-5 4.800z" fill="#2b2b2b" stroke="#6e6e6e" stroke-width="1"/><path d="M396.500 697.5h6" stroke="#6e6e6e" stroke-width="1.200"/></svg>
<svg style="left:417.400px;top:464px" width="16" height="20" viewBox="0 0 16 20"><path d="M7.700 1C4.100 1 1.300 3.800 1.300 7.300c0 2.100 1 3.700 2.300 5 .6.600.9 1.300.9 2h6.400c0-.7.300-1.400.9-2 1.300-1.300 2.300-2.900 2.300-5C14.100 3.800 11.300 1 7.700 1z" fill="#f0a732"/><path d="M4.300 15.500h7.400" stroke="#a0a6a9" stroke-width="1.200"/><path d="M5 17.900h6" stroke="#8e9497" stroke-width="2"/></svg>
<div class="abs" style="left:0;top:0;width:1580px;height:717px;overflow:hidden;font-family:'DejaVu Sans Mono','Liberation Mono',monospace;font-size:16.61px;line-height:1;color:#a9b7c6;white-space:pre;text-rendering:auto">
<div class="abs" style="left:407px;top:140.50px">    }</div>
<div class="abs" style="left:407px;top:195.50px"><span class="k">    protected void </span><span class="m">deserializePageAttributes</span>() {</div>
<div class="abs" style="left:407px;top:222.50px"><span class="k">        if </span>(!<span class="k">this</span>.isPageSessionDeserialized()) {</div>
<div class="abs" style="left:407px;top:250.50px">            RequestContext <span class="u">context</span> = <span class="k">this</span>.getRequestContext()<span class="k">;</span></div>
<div class="abs" style="left:407px;top:277.50px"><span class="k">            if </span>(<span class="u">context</span> == <span class="k">null</span>) {</div>
<div class="abs" style="left:407px;top:305.50px">                <span class="u">context</span> = RequestManager.<span class="i">getRequestContext</span>()<span class="k">;</span></div>
<div class="abs" style="left:407px;top:332.50px">            }</div>
<div class="abs" style="left:407px;top:387.50px">            String pageAttributesParam = <span class="u">context</span>.getRequest().getParameter(<span class="s">"jato.pageSession"</span>)<span class="k">;</span></div>
<div class="abs" style="left:407px;top:415.50px"><span class="k">            if </span>(pageAttributesParam != <span class="k">null</span> &amp;&amp; pageAttributesParam.trim().length() &gt; <span class="n">0</span>) {</div>
<div class="abs" style="left:407px;top:442.50px"><span class="k">                try </span>{</div>
<div class="abs" style="left:407px;top:470.50px"><span class="k">                    this</span>.setPageSessionAttributes((Map)Encoder.<span class="i">deserialize</span>(Encoder.<span class="i">decodeHttp64</span>(pageAttributesParam)<span class="k">, false</span>))<span class="k">;</span></div>
<div class="abs" style="left:407px;top:497.50px">                } <span class="k">catch </span>(Exception var4) {</div>
<div class="abs" style="left:407px;top:525.50px"><span class="k">                    this</span>.handleDeserializePageAttributesException(var4)<span class="k">;</span></div>
<div class="abs" style="left:407px;top:552.50px">                }</div>
<div class="abs" style="left:407px;top:580.50px">            }</div>
<div class="abs" style="left:407px;top:635.50px"><span class="k">            this</span>.setPageSessionDeserialized()<span class="k">;</span></div>
<div class="abs" style="left:407px;top:662.50px">        }</div>
<div class="abs" style="left:407px;top:690.50px">    }</div>
</div>
<div class="abs" style="left:1086px;top:466px;width:2.200px;height:22px;background:#c4c4c4"></div>
<svg style="left:0;top:0" width="1580" height="717"><rect x="603.750" y="459.650" width="968.850" height="37.750" rx="4" ry="4" fill="none" stroke="#fb2015" stroke-width="4.600"/></svg>
<div class="abs" style="left:1364.00px;top:692.00px;font-size:13.8px;line-height:1;color:#f2f2f2;white-space:pre;text-shadow:0 0 2px #000;">安全客</div>
<div class="abs" style="left:1402.00px;top:692.00px;font-size:13.8px;line-height:1;color:#f2f2f2;white-space:pre;text-shadow:0 0 2px #000;">（</div>
<div class="abs" style="left:1419.60px;top:691.00px;font-size:15px;line-height:1;color:#f2f2f2;white-space:pre;letter-spacing:0.078px;text-shadow:0 0 2px #000;">www.anquanke.com</div>
<div class="abs" style="left:1559.00px;top:692.00px;font-size:13.8px;line-height:1;color:#f2f2f2;white-space:pre;text-shadow:0 0 2px #000;">）</div>
</body></html>
